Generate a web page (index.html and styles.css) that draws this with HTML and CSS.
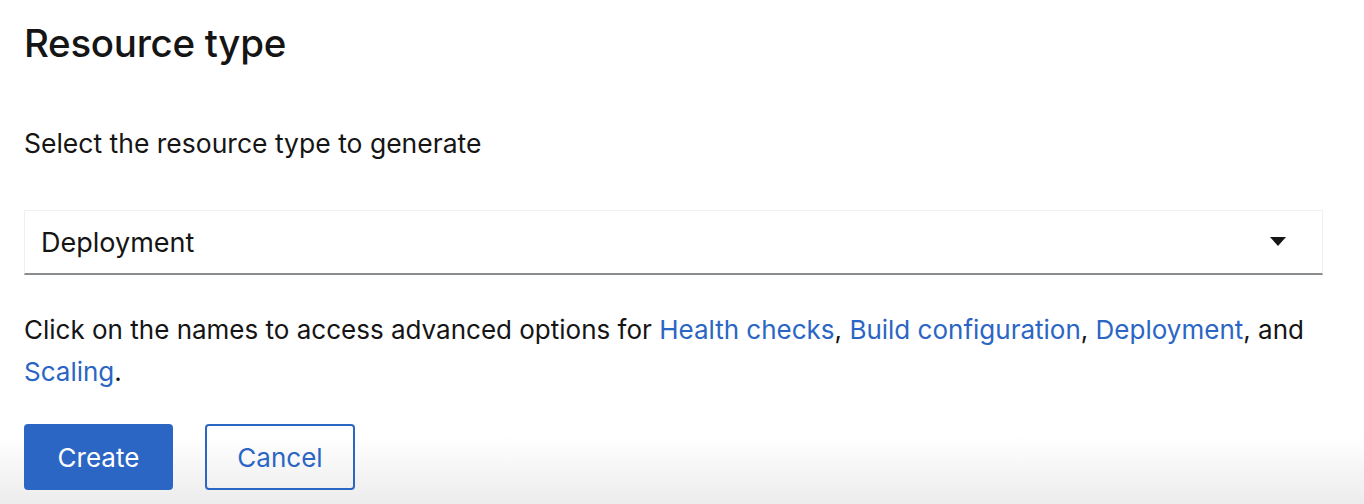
FILE: index.html
```html
<!DOCTYPE html>
<html>
<head>
<meta charset="utf-8">
<link rel="stylesheet" href="styles.css">
</head>
<body>
<div class="page">
  <h1 class="title">Resource type</h1>
  <div class="label">Select the resource type to generate</div>
  <div class="select">
    <span class="select-text">Deployment</span>
    <svg class="caret" width="16" height="10" viewBox="0 0 16 10"><path d="M0 0 H16 L8 9 Z" fill="#151515"/></svg>
  </div>
  <p class="help">Click on the names to access advanced options for <a href="#">Health checks</a>, <a href="#">Build configuration</a>, <a href="#">Deployment</a>, and <a href="#">Scaling</a>.</p>
  <div class="actions">
    <button class="btn btn-primary">Create</button>
    <button class="btn btn-secondary">Cancel</button>
  </div>
</div>
</body>
</html>
```

FILE: styles.css
```css
html, body {
  margin: 0;
  padding: 0;
  height: 100%;
}
body {
  font-family: Inter, "Noto Sans", sans-serif;
  color: #151515;
  background: linear-gradient(to bottom, #ffffff 0px, #ffffff 436px, #ececec 504px);
  overflow: hidden;
}
.page {
  padding: 0 41px 0 24px;
}
.title {
  margin: 0;
  padding-top: 18px;
  font-size: 38.5px;
  font-weight: 500;
  line-height: 50px;
  letter-spacing: -0.3px;
}
.label {
  margin-top: 54px;
  font-size: 26.5px;
  line-height: 42px;
}
.select {
  margin-top: 46px;
  height: 65px;
  box-sizing: border-box;
  border: 1px solid #f0f0f0;
  border-bottom: 2px solid #8a8d90;
  display: flex;
  align-items: center;
  justify-content: space-between;
  padding: 0 36px 0 16px;
}
.select-text {
  font-size: 27px;
}
.caret {
  display: block;
}
.help {
  margin: 34px 0 0;
  font-size: 26px;
  line-height: 42px;
}
.help a {
  color: #2b66c4;
  text-decoration: none;
}
.actions {
  margin-top: 31px;
  display: flex;
  gap: 32px;
}
.btn {
  height: 66px;
  box-sizing: border-box;
  border-radius: 4px;
  font-family: inherit;
  font-size: 26px;
  padding: 0;
  width: 149px;
}
.btn-primary {
  background: #2b66c4;
  color: #fff;
  border: none;
}
.btn-secondary {
  width: 150px;
  background: transparent;
  color: #2b66c4;
  border: 2px solid #2b66c4;
}
```
